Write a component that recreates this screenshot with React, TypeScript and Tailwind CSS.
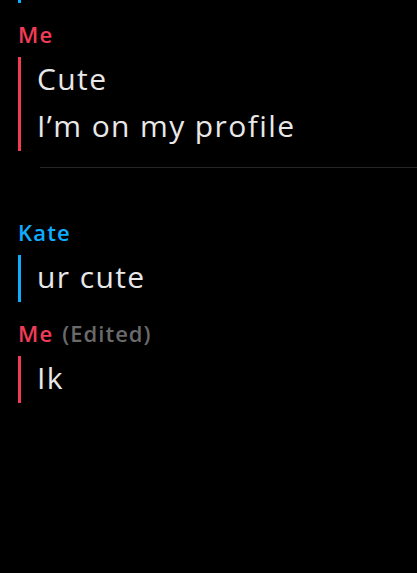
const RED = 'text-[#f23c57]';

type Group = {
  sender: string;
  mine: boolean;
  edited?: boolean;
  lines: string[];
};

const groups: Group[] = [
  { sender: 'Me', mine: true, lines: ['Cute', 'I’m on my profile'] },
  { sender: 'Kate', mine: false, lines: ['ur cute'] },
  { sender: 'Me', mine: true, edited: true, lines: ['Ik'] },
];

function MessageGroup({ group }: { group: Group }) {
  return (
    <div className="pl-[18px]">
      <div className="h-[26px] text-[22px] leading-[26px] font-semibold tracking-[1.2px]">
        <span className={group.mine ? RED : 'text-[#0eadff]'}>{group.sender}</span>
        {group.edited && <span className="ml-[9px] text-[#6a6a6a] tracking-[1px]">(Edited)</span>}
      </div>
      <div
        className={
          'mt-[10px] border-l-[3px] pl-[16px] ' +
          (group.mine ? 'border-[#f23c57]' : 'border-[#0eadff]')
        }
      >
        {group.lines.map((line) => (
          <div
            key={line}
            className="h-[47px] text-[30px] leading-[43px] tracking-[1.4px] text-[#e8e8e8]"
          >
            {line}
          </div>
        ))}
      </div>
    </div>
  );
}

export default function App() {
  return (
    <div
      className="w-[417px] h-[573px] overflow-hidden bg-black"
      style={{ fontFamily: '"Open Sans", "Noto Sans", sans-serif' }}
    >
      {/* tail of the previous message */}
      <div className="ml-[18px] w-[3px] h-[3px] bg-[#0eadff]"></div>
      <div className="mt-[18px]">
        <MessageGroup group={groups[0]} />
      </div>
      <div className="ml-[40px] mt-[16px] h-px bg-[#262626]"></div>
      <div className="mt-[51px] flex flex-col gap-[18px]">
        <MessageGroup group={groups[1]} />
        <MessageGroup group={groups[2]} />
      </div>
    </div>
  );
}
